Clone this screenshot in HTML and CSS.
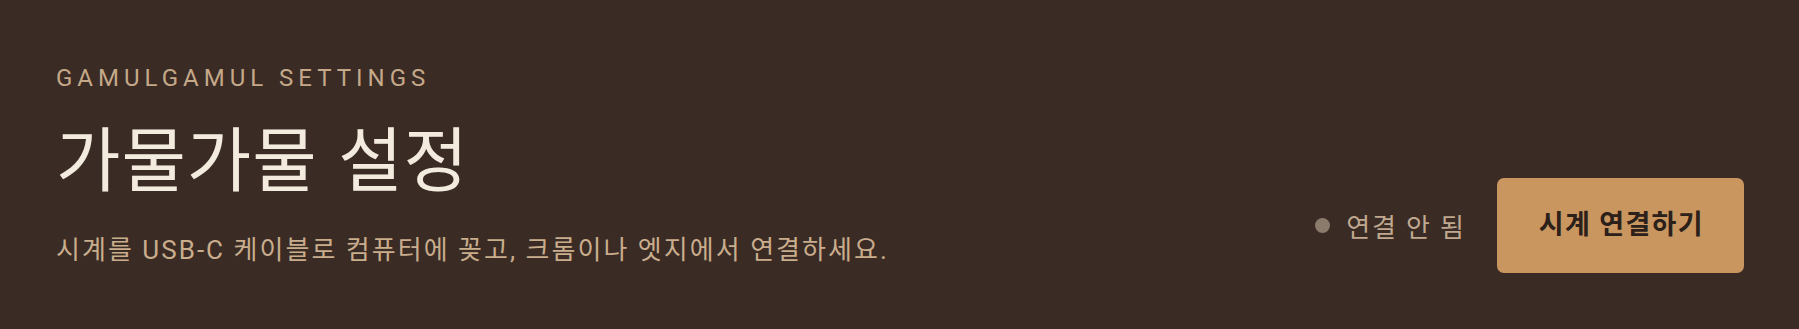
FILE: index.html
```html
<!DOCTYPE html>

<html lang="ko">

<head>
  <meta charset="UTF-8">
  <meta name="viewport" content="width=device-width, initial-scale=1">

  <title>가물가물 설정</title>

  <link rel="stylesheet" href="styles.css">
</head>

<body>
  <header id="settings-header">
    <div class="intro">
      <p class="eyebrow">GAMULGAMUL SETTINGS</p>
      <h1>가물가물 설정</h1>
      <p class="lead">시계를 USB-C 케이블로 컴퓨터에 꽂고, 크롬이나 엣지에서 연결하세요.</p>
    </div>

    <div class="connection">
      <span class="status"><span class="dot"></span>연결 안 됨</span>
      <button type="button">시계 연결하기</button>
    </div>
  </header>
</body>

</html>
```

FILE: styles.css
```css
html {
  margin: 0;
  padding: 0;
}

body {
  margin: 0;
  background: #3a2b25;
  font-family: Roboto, "Noto Sans CJK KR", sans-serif;
}

#settings-header {
  display: flex;
  flex-direction: row;
  justify-content: space-between;
  align-items: flex-end;
  box-sizing: border-box;
  height: 100vh;
  padding: 63px 55px 56px 56px;

  .intro {
    align-self: flex-start;
  }

  .eyebrow {
    margin: 0;
    font-size: 24px;
    line-height: 30px;
    letter-spacing: 5px;
    color: #c4a888;
  }

  h1 {
    margin: 23px 0 0 0;
    font-family: "Noto Sans CJK KR", sans-serif;
    font-weight: 400;
    font-size: 70px;
    line-height: 80px;
    letter-spacing: 1px;
    color: #f4ebdf;
  }

  .lead {
    margin: 36px 0 0 0;
    font-size: 26px;
    line-height: 36px;
    letter-spacing: 0.078em;
    color: #c9ad8c;
  }
}

.connection {
  display: flex;
  flex-direction: row;
  align-items: center;
  gap: 31px;

  .status {
    display: flex;
    align-items: center;
    gap: 16px;
    font-size: 26px;
    letter-spacing: 0.07em;
    color: #bfa88f;
  }

  .dot {
    width: 15px;
    height: 15px;
    border-radius: 50%;
    background: #8b7b6d;
  }

  button {
    padding: 28px 40px 28px 42px;
    border: 0;
    border-radius: 7px;
    background: #c9965f;
    color: #2c201b;
    font-family: inherit;
    font-weight: 700;
    font-size: 27px;
    line-height: 39px;
    letter-spacing: 0.05em;
  }
}
```
